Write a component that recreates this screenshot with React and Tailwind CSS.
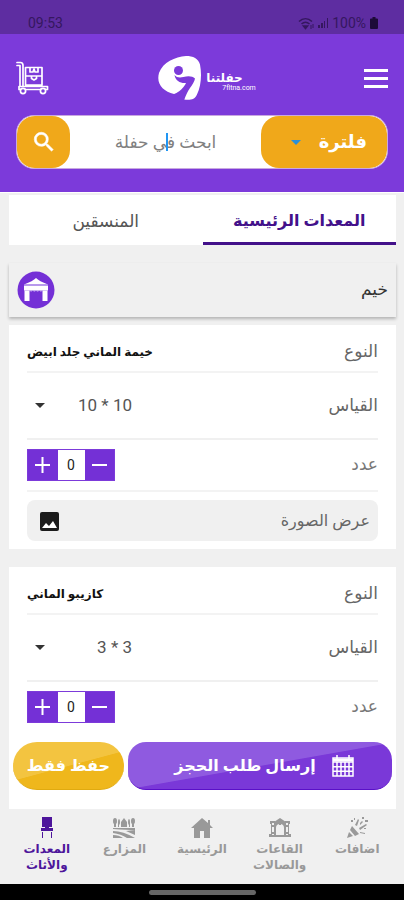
import React from "react";

function StatusBar() {
  return (
    <div dir="ltr" className="flex h-[34px] items-end justify-between bg-[#5e2da1] pr-[26px] pb-px pl-7 text-sm text-[#35175f]">
      <span>09:53</span>
      <div className="flex items-center gap-1">
        <svg width="16" height="13" viewBox="0 0 16 13" fill="none" stroke="currentColor" strokeWidth="1.6">
          <path d="M1 4.5C5 .8 10 .8 14 4.5M3.500 7c2.600-2.300 5.400-2.300 8 0" />
          <path d="M7.500 11.500 5.500 9h4z" fill="currentColor" />
          <path d="M13 8v4M15 7v4" strokeWidth="1" />
        </svg>
        <svg width="10" height="10" viewBox="0 0 10 10" fill="currentColor">
          <path d="M0 7h2v3H0zM3 5h2v5H3zM6 3h1v7H6zM9 0h1v10H9z" />
        </svg>
        <span>100%</span>
        <svg width="8" height="12" viewBox="0 0 8 12" fill="#1d0b38">
          <path d="M2.500 0h3v1.500H7q1 0 1 1V11q0 1-1 1H1q-1 0-1-1V2.500q0-1 1-1h1.500z" />
        </svg>
      </div>
    </div>
  );
}

function CartIcon() {
  return (
    <svg width="34" height="34" viewBox="0 0 34 34" fill="none" stroke="white" strokeWidth="1.700" strokeLinejoin="round" strokeLinecap="round">
      <path d="M1 1.500h3.500q2.500 0 2.500 3V25M1 4.500h3V25" />
      <path d="M9.500 6.500H26v17.500H9.500zM9.500 15H26M14 6.500v4.500h3l1-3 1 3h3V6.500M15.500 15v2.500l2.500 1.500 2.500-1.500V15M3 25.500h28.500v3H3z" />
      <circle cx="7" cy="30" r="2.600" fill="#7c3ada" />
      <circle cx="27" cy="30" r="2.600" fill="#7c3ada" />
    </svg>
  );
}

function Logo() {
  return (
    <div dir="ltr" className="flex items-center gap-1 text-white">
      <svg width="44" height="44" viewBox="0 0 44 44">
        <path d="M28 0C17 1 5 6 1 17c-3 11 4 18 15 21l10 5.500c6 1 11 0 13-5 4-8 5-20 3-30C40.500 2.500 35 0 28 0z" fill="white" />
        <circle cx="20.500" cy="14.500" r="4.500" fill="#7c3ada" />
        <path d="M16.500 19c2 2.500 5 3 9 2 4.500-1.200 9-1 11.500 1.500-.5 3-2.500 6-5 9.500-2 3-4 7-6 12.500l-11-6c5-1.500 8-4.500 10.500-7.500 1-1.500 2-2.500 2.500-4-5.500.5-10.500-2-11.500-8z" fill="#7c3ada" />
      </svg>
      <div className="flex flex-col items-start pt-2">
        <span dir="rtl" className="text-xs leading-3 font-bold">حفلتنا</span>
        <span className="pl-4 text-[7px] leading-2">7fltna.com</span>
      </div>
    </div>
  );
}

function Caret({ className }) {
  return (
    <svg width="10" height="5" viewBox="0 0 10 5" fill="currentColor" className={className}>
      <path d="M0 0h10L5 5z" />
    </svg>
  );
}

function Header() {
  return (
    <header className="flex h-[158px] flex-col bg-[#7c3ada] px-4 pt-[22px]">
      <div className="flex items-center justify-between">
        <button aria-label="القائمة" className="flex h-11 flex-col justify-center gap-[5px]">
          <span className="h-[3px] w-6 bg-white" />
          <span className="h-[3px] w-6 bg-white" />
          <span className="h-[3px] w-6 bg-white" />
        </button>
        <Logo />
        <button aria-label="السلة"><CartIcon /></button>
      </div>
      <form className="mt-[15px] flex h-[54px] overflow-hidden rounded-[18px] border border-[#c9a8e0] bg-white">
        <div className="relative w-[126px]">
          <select aria-label="فلترة" className="h-full w-full appearance-none rounded-[18px] bg-[#f0a81a] pr-5 text-lg font-bold text-white">
            <option>فلترة</option>
          </select>
          <Caret className="pointer-events-none absolute top-6 left-[30px] text-[#2a8fd8]" />
        </div>
        <div className="relative min-w-0 flex-1">
          <input aria-label="بحث" placeholder="ابحث في حفلة" className="h-full w-full text-center text-[17px] text-gray-700 outline-none placeholder:text-[#808080]" />
          <span className="pointer-events-none absolute top-[17px] left-1/2 h-[18px] w-0.5 bg-[#2196f3]" />
        </div>
        <button type="button" aria-label="ابحث" className="flex w-[53px] items-center justify-center rounded-[18px] bg-[#f0a81a]">
          <svg width="26" height="26" viewBox="0 0 24 24" fill="white" stroke="white" strokeWidth="0.500">
            <path d="M15.500 14h-.79l-.28-.27A6.470 6.470 0 0 0 16 9.500 6.500 6.500 0 1 0 9.500 16c1.610 0 3.090-.59 4.230-1.570l.27.28v.79l5 4.990L20.490 19l-4.990-5zm-6 0a4.500 4.500 0 1 1 0-9 4.500 4.500 0 0 1 0 9z" />
          </svg>
        </button>
      </form>
    </header>
  );
}

function Tabs() {
  return (
    <div role="tablist" className="mt-0.5 flex h-[50px] bg-white">
      <button role="tab" aria-selected="true" className="flex-1 border-b-[3px] border-[#43118a] pt-1 text-base leading-6 font-bold text-[#43118a]">المعدات الرئيسية</button>
      <button role="tab" aria-selected="false" className="flex-1 border-b-[3px] border-white pt-1 text-[17px] leading-6 text-[#555555]">المنسقين</button>
    </div>
  );
}

function Category() {
  return (
    <button className="mt-[18px] flex h-[54px] items-center justify-between bg-[#f0f0f0] px-2 shadow-[0_2px_3px_rgba(0,0,0,0.25)]">
      <span className="text-[17px] text-[#333333]">خيم</span>
      <svg width="38" height="38" viewBox="0 0 38 38">
        <circle cx="19" cy="19" r="18.500" fill="#7430d6" />
        <path d="M19 7q-3 3-12 6.500h24Q22 10 19 7z" fill="white" />
        <path d="M7 13.500h24V15H7z" fill="#b79aec" />
        <path d="M7 15h24v4.500H7z" fill="white" />
        <path d="M7.500 19.500h5V30h-5zM25.500 19.500h5V30h-5z" fill="white" />
        <path d="M12.500 19.500q1.600 2 3.200 0 1.700 2 3.300 0 1.600 2 3.300 0 1.600 2 3.200 0z" fill="#d9c8f6" />
      </svg>
    </button>
  );
}

function Stepper({ id }) {
  return (
    <div className="flex h-8 w-[88px] border border-[#7c3ada] bg-[#7430d6]">
      <button aria-label="إنقاص" className="flex flex-1 items-center justify-center">
        <span className="h-0.5 w-[15px] bg-white" />
      </button>
      <input id={id} defaultValue="0" className="w-[27px] bg-white text-center text-sm text-[#222222] outline-none" />
      <button aria-label="زيادة" className="flex flex-1 items-center justify-center">
        <svg width="15" height="16" viewBox="0 0 15 16" stroke="white" strokeWidth="2"><path d="M0 8h15M7.500 0v16" /></svg>
      </button>
    </div>
  );
}

function ItemRows({ id, type, size }) {
  return (
    <>
      <div className="flex h-12 items-center justify-between border-b-2 border-[#f3f3f3] pt-2">
        <span className="text-[17px] text-[#666666]">النوع</span>
        <span className="text-xs font-bold text-[#111111]">{type}</span>
      </div>
      <div className="flex h-[67px] items-center justify-between border-b-2 border-[#f0f0f0]">
        <label htmlFor={id + "-size"} className="text-[17px] text-[#666666]">القياس</label>
        <div className="relative w-[105px]">
          <select id={id + "-size"} className="w-full appearance-none text-[17px] leading-6 text-[#555555]">
            <option>{size}</option>
          </select>
          <Caret className="pointer-events-none absolute top-[10px] left-2 text-[#333333]" />
        </div>
      </div>
      <div className="flex h-[50px] items-center justify-between">
        <label htmlFor={id + "-count"} className="text-[17px] text-[#777777]">عدد</label>
        <Stepper id={id + "-count"} />
      </div>
    </>
  );
}

function Actions() {
  return (
    <div className="mt-2.5 flex h-12 gap-1 px-1">
      <button className="flex flex-1 items-center justify-center gap-4 rounded-[18px] border-b border-[#5a10c8] bg-[linear-gradient(170deg,#8f5ae0_50%,#7a38d8_51%)] pl-2 text-base font-bold text-white">
        <svg width="22" height="22" viewBox="0 0 22 22" fill="none" stroke="white" strokeWidth="1.500">
          <path d="M1 3h20v18H1zM1 7h20M1 11.700h20M1 16.300h20M5 7v14M9 7v14M13 7v14M17 7v14M5 0v4M17 0v4" />
          <path d="M1 5h20" strokeWidth="3" />
        </svg>
        <span>إرسال طلب الحجز</span>
      </button>
      <button className="w-[111px] rounded-full border-b border-[#e0aa10] bg-[linear-gradient(165deg,#f3c440_50%,#efb71c_51%)] text-base font-bold text-white">حفظ فقط</button>
    </div>
  );
}

const navItems = [
  {
    label: "اضافات",
    icon: (
      <>
        <path d="M1 21 3 15l4 4zM4 13l2-4 7 8-4 2z" />
        <path d="m9 8 3-6 1 1-2 6zM13 11l7-4 1 1-7 5zM14 15l5 1v1l-5-1zM14 6l2-2 1 1-3 3zM5 3h2v2H5zM16 0h2v2h-2zM19 3h3v2h-3zM18 11h2v1h-2zM8 1h1v2H8z" />
      </>
    ),
  },
  {
    label: "القاعات والصالات",
    icon: (
      <>
        <path d="M1 4h5v2H3v2h3v2H3v5h3v2H3v1h16v-1h-3v-2h3v-5h-3V8h3V6h-3V4h5v3h-1v10h2v3H0v-3h2V7H1z" />
        <path fillRule="evenodd" d="M11 1 5 5v14h12V5zM7 18v-7q0-4 4-4t4 4v7z" />
        <path d="M10 3h2v5h-2zM5 10h2v1H5zM15 10h2v1h-2z" />
      </>
    ),
  },
  { label: "الرئيسية", icon: <path d="M11 1 0 11h3v10h6v-7h4v7h6V11h3l-3-3V3h-2v3z" /> },
  {
    label: "المزارع",
    icon: (
      <>
        <path d="M0 4q0-3 2-3t2 3-1 3v3H1V7Q0 7 0 4zM5 5q0-3 1-3t1 3-1 3v2H5zM18 4q0-3 2-3t2 3-1 3v3h-2V7q-1 0-1-3zM15 5q0-3 1-3t1 3v5h-1V8q-1 0-1-3z" />
        <path d="m11 1-3 4v5h6V5zM0 11h22v2q-8 0-22-1zM0 14q10 0 22 7H14Q8 17 0 16zM13 14l9-1v5zM0 18q6 0 10 3H0z" />
      </>
    ),
  },
  {
    label: "المعدات والأثاث",
    active: true,
    icon: <path d="M6 0h10v10H6zM9 10h4v1H9zM5 11h12v3H5zM6 15h1v6H6zM15 15h1v6h-1z" />,
  },
];

function BottomNav() {
  return (
    <nav className="grid h-[75px] grid-cols-5 bg-[#f0f0f0] px-2 pt-2">
      {navItems.map((item) => (
        <a key={item.label} href="#" className={"flex flex-col items-center px-1 text-center text-xs leading-4 font-bold " + (item.active ? "text-[#4d159b]" : "text-[#999999]")}>
          <svg width="22" height="22" viewBox="0 0 22 22" fill="currentColor" className="mb-0.5 shrink-0">{item.icon}</svg>
          {item.label}
        </a>
      ))}
    </nav>
  );
}

export default function App() {
  return (
    <div dir="rtl" className="flex min-h-screen flex-col bg-[#f0f0f0] font-[Roboto,'DejaVu_Sans',sans-serif]">
      <StatusBar />
      <Header />
      <main className="flex flex-1 flex-col border-t border-white pr-2 pl-[9px]">
        <Tabs />
        <Category />
        <section className="mt-2 flex flex-col bg-white px-[18px] pb-2">
          <ItemRows id="tent" type="خيمة الماني جلد ابيض" size="10 * 10" />
          <button className="flex h-[51px] items-center border-t-2 border-[#f3f3f3] pt-2">
            <span className="flex h-[41px] flex-1 items-center justify-between rounded-lg bg-[#f0f0f0] px-2 text-base text-[#666666]">
              عرض الصورة
              <svg width="24" height="24" viewBox="0 0 24 24" className="mx-0.5">
                <rect x="3" y="3" width="19" height="19" rx="2" fill="#1c1c1c" />
                <path d="m5 19 4-5 3 3 4-5 4 7z" fill="white" />
              </svg>
            </span>
          </button>
        </section>
        <section className="mt-[18px] flex flex-1 flex-col bg-white">
          <div className="px-[18px]">
            <ItemRows id="gazebo" type="كازيبو الماني" size="3 * 3" />
          </div>
          <Actions />
        </section>
      </main>
      <BottomNav />
      <div className="flex h-4 items-center justify-center bg-black">
        <span className="h-[5px] w-[107px] rounded-full bg-[#666666]" />
      </div>
    </div>
  );
}
